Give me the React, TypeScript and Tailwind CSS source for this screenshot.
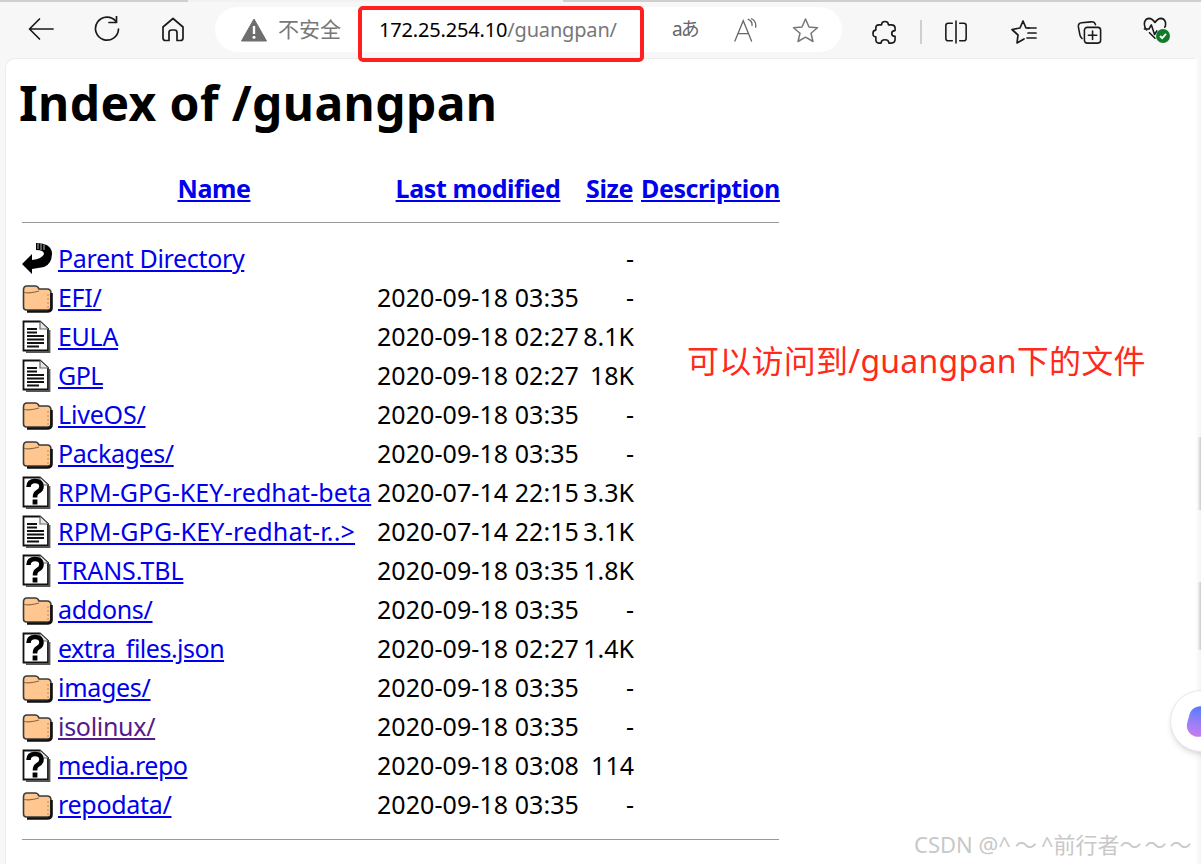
import React from "react";

const Folder = () => (
  <svg width="31" height="30" viewBox="0 0 31 30" className="block">
    <path d="M1.5 7 Q1.5 3 5 3 H13 Q16 3 17 6 H25 Q29 6 29 10 V24 Q29 27 26 27 H4.5 Q1.5 27 1.5 24 Z" fill="#ffc78f" stroke="#3a3a3a" strokeWidth="1.6" />
    <path d="M2 9.5 Q10 10.5 17 8" stroke="#8a6a48" strokeWidth="1.2" fill="none" />
    <path d="M29.5 10 V25 Q29.5 28.5 25 28.5 H5" stroke="#111" strokeWidth="2.6" fill="none" />
    <path d="M26 11 V25" stroke="#b98a5c" strokeWidth="1" strokeDasharray="2 2" />
  </svg>
);

const DocBase = ({ children }: { children: React.ReactNode }) => (
  <svg width="29" height="33" viewBox="0 0 29 33" className="block">
    <path d="M1.5 1.5 H18 L26 9 V30.5 H1.5 Z" fill="#fff" stroke="#111" strokeWidth="1.8" />
    <path d="M18 1.5 V9 H26" fill="#e8e8e8" stroke="#666" strokeWidth="1.2" />
    <path d="M27.5 10 V32 H4" fill="none" stroke="#555" strokeWidth="1.8" />
    {children}
  </svg>
);

const Doc = () => (
  <DocBase>
    <path d="M5 9 H15 M5 12.5 H15 M5 16 H22 M5 19.5 H22 M5 23 H22 M5 26.5 H17" stroke="#111" strokeWidth="2" />
  </DocBase>
);

const QuestionMark = () => (
  <g fill="none" stroke="#000" strokeWidth="4.6">
    <path d="M6.5 11 Q6.5 5 13 5 Q19.5 5 19.5 10.5 Q19.5 14 15.5 16 Q13 17.2 13 21.5" />
    <path d="M13 23.5 V28.5" strokeWidth="4.8" />
  </g>
);

const Unknown = () => (
  <DocBase>
    <QuestionMark />
  </DocBase>
);

const Back = () => (
  <svg width="31" height="33" viewBox="0 0 31 33" className="block">
    <path d="M0 22 L10 12 L10 18 Q20 17 22 12 Q22 8 14 8 L14 1 Q29 1 30 11 Q30 22 22 25 L10 27 V32 Z" fill="#000" />
    <path d="M16 1.5 V7 M19 1.5 V8 M22 2.5 V8" stroke="#999" strokeWidth="1.2" />
  </svg>
);

type Row = { icon: "p" | "f" | "d" | "u"; name: string; date: string; size: string; visited?: boolean; track: string };

const rows: Row[] = [
  { icon: "p", name: "Parent Directory", date: "", size: "-", track: "tracking-[-0.35px]" },
  { icon: "f", name: "EFI/", date: "2020-09-18 03:35", size: "-", track: "tracking-[-0.3px]" },
  { icon: "d", name: "EULA", date: "2020-09-18 02:27", size: "8.1K", track: "tracking-[-0.3px]" },
  { icon: "d", name: "GPL", date: "2020-09-18 02:27", size: "18K", track: "tracking-[-0.5px]" },
  { icon: "f", name: "LiveOS/", date: "2020-09-18 03:35", size: "-", track: "tracking-[-0.2px]" },
  { icon: "f", name: "Packages/", date: "2020-09-18 03:35", size: "-", track: "tracking-[-0.4px]" },
  { icon: "u", name: "RPM-GPG-KEY-redhat-beta", date: "2020-07-14 22:15", size: "3.3K", track: "tracking-[0.1px]" },
  { icon: "d", name: "RPM-GPG-KEY-redhat-r..>", date: "2020-07-14 22:15", size: "3.1K", track: "tracking-[0.2px]" },
  { icon: "u", name: "TRANS.TBL", date: "2020-09-18 03:35", size: "1.8K", track: "tracking-[-0.1px]" },
  { icon: "f", name: "addons/", date: "2020-09-18 03:35", size: "-", track: "tracking-[-0.3px]" },
  { icon: "u", name: "extra_files.json", date: "2020-09-18 02:27", size: "1.4K", track: "tracking-[-0.5px]" },
  { icon: "f", name: "images/", date: "2020-09-18 03:35", size: "-", track: "tracking-[-0.3px]" },
  { icon: "f", name: "isolinux/", date: "2020-09-18 03:35", size: "-", visited: true, track: "tracking-[-0.3px]" },
  { icon: "u", name: "media.repo", date: "2020-09-18 03:08", size: "114", track: "tracking-[-0.5px]" },
  { icon: "f", name: "repodata/", date: "2020-09-18 03:35", size: "-", track: "tracking-[-0.3px]" },
];

const RowIcon = ({ t }: { t: Row["icon"] }) =>
  t === "p" ? <Back /> : t === "f" ? <Folder /> : t === "d" ? <Doc /> : <Unknown />;

const stroke = { fill: "none", stroke: "#1a1a1a", strokeWidth: 1.7, strokeLinecap: "round", strokeLinejoin: "round" } as const;

export default function App() {
  return (
    <div className="relative flex h-[864px] w-[1201px] flex-col overflow-hidden bg-[#f7f7f7] font-['Noto_Sans','Noto_Sans_CJK_SC',sans-serif]">
      {/* top strip */}
      <div className="flex h-[2px] shrink-0">
        <div className="w-[188px] bg-[#cfcfcf]" />
        <div className="w-[375px] bg-[#f2f2f2]" />
        <div className="flex-1 bg-[#cfcfcf]" />
      </div>

      {/* toolbar */}
      <div className="flex h-[56px] shrink-0 items-start">
        <div className="flex h-[54px] items-center">
          <svg width="26" height="24" viewBox="0 0 26 24" className="ml-[28px]" {...stroke}>
            <path d="M25 12 H2 M11.5 2 L1.5 12 L11.5 22" />
          </svg>
          <svg width="26" height="26" viewBox="0 0 26 26" className="ml-[40px]" {...stroke}>
            <path d="M22 5.5 A11.5 11.5 0 1 0 24.5 13" />
            <path d="M15 6.5 H22.5 V0.5" />
          </svg>
          <svg width="24" height="25" viewBox="0 0 24 25" className="ml-[41px]" {...stroke}>
            <path d="M2 10 L12 1.5 L22 10 V21 Q22 23.5 19.5 23.5 H16 V15.5 Q16 13 13.5 13 H10.5 Q8 13 8 15.5 V23.5 H4.5 Q2 23.5 2 21 Z" />
          </svg>
        </div>

        <div className="ml-[30px] mt-[5px] flex h-[45px] w-[627px] items-center rounded-full bg-white">
          <svg width="26" height="24" viewBox="0 0 26 24" className="ml-[26px]">
            <path d="M13 1 L25.5 23 H0.5 Z" fill="#6e6e6e" stroke="#6e6e6e" strokeWidth="1" strokeLinejoin="round" />
            <path d="M13 8 V16" stroke="#fff" strokeWidth="2.4" />
            <circle cx="13" cy="19.3" r="1.5" fill="#fff" />
          </svg>
          <span className="ml-[11px] w-[63px] whitespace-nowrap text-[21px] leading-none text-[#777]">不安全</span>
          <span className="ml-[38px] w-[237px] whitespace-nowrap text-[20px] leading-none tracking-[-0.17px] text-black">
            172.25.254.10<span className="text-[#777]">/guangpan/</span>
          </span>
          <span className="ml-[56px] w-[26px] whitespace-nowrap text-[19px] leading-none tracking-[-2px] text-[#666]">aあ</span>
          <svg width="24" height="24" viewBox="0 0 26 26" className="ml-[36px]" fill="none" stroke="#666" strokeWidth="1.4" strokeLinecap="round">
            <path d="M1 25 L10 3 L19 25 M4.5 17 H15.5" />
            <path d="M15.5 1.5 Q20 3.5 19.5 8 M19 0.8 Q24.5 3.5 23.5 10" />
          </svg>
          <svg width="27" height="26" viewBox="0 0 27 26" className="ml-[34px]" fill="none" stroke="#777" strokeWidth="1.5" strokeLinejoin="round">
            <path d="M13.5 2 L17 10 L25.5 10.7 L19 16.3 L21 24.5 L13.5 20.2 L6 24.5 L8 16.3 L1.5 10.7 L10 10 Z" />
          </svg>
        </div>

        <div className="flex h-[60px] items-center">
          <svg width="25" height="25" viewBox="0 0 26 26" className="ml-[30px]" {...stroke}>
            <path d="M10 5 Q10 1.5 13.5 1.5 Q17 1.5 17 5 H20 Q24 5 24 8.5 V11 Q20.5 11 20.5 14 Q20.5 17 24 17 V20 Q24 24 20 24 H17.5 Q17.5 20.5 13.5 20.5 Q9.5 20.5 9.5 24 H7 Q4 24 4 20 V17.5 Q1 17.5 1 14 Q1 10.5 4 10.5 V8 Q4 5 7 5 Z" />
          </svg>
          <div className="ml-[23px] h-[24px] w-[2px] bg-[#cfcfcf]" />
          <svg width="24" height="24" viewBox="0 0 26 26" className="ml-[22px]" {...stroke}>
            <path d="M9 3.5 H4.5 Q2 3.5 2 6 V20 Q2 22.5 4.5 22.5 H9 M17 3.5 H21.5 Q24 3.5 24 6 V20 Q24 22.5 21.5 22.5 H17 M13 1 V25" />
          </svg>
          <svg width="26" height="24" viewBox="0 0 26 24" className="ml-[43px]" {...stroke}>
            <path d="M18 8 H15 L12 1 L9 8 L1 9.5 L7 15 L6 23 L13 19" />
            <path d="M17 8 H25 M17 13 H25 M16 18 H25" />
          </svg>
          <svg width="25" height="25" viewBox="0 0 27 26" className="ml-[40px]" {...stroke}>
            <rect x="8" y="7.5" width="17.5" height="17" rx="3" />
            <path d="M16.8 11.5 V20.5 M12.3 16 H21.3" />
            <path d="M20 4.5 Q19 1.2 15 1.5 L5 2.5 Q1 3 1.5 7 L3 15 Q3.5 18 5.5 19.5" />
          </svg>
          <div className="relative ml-[41px] h-[30px] w-[28px]">
            <svg width="24" height="24" viewBox="0 0 26 26" {...stroke}>
              <path d="M13 6 Q10 1.5 6.5 1.5 Q1.5 2 1.5 8 Q1.5 11 4 14 M13 6 Q16 1.5 19.5 1.5 Q24.5 2 24.5 8 Q24.5 10 23.5 11 M1.5 13 H6.5 L9 8.5 L12.5 19 L15 15" />
              <path d="M7 17 L13 23" />
            </svg>
            <div className="absolute left-[13px] top-[12px] flex h-[14px] w-[14px] items-center justify-center rounded-full bg-[#107c2a]">
              <svg width="10" height="10" viewBox="0 0 10 10" fill="none" stroke="#fff" strokeWidth="1.8">
                <path d="M2 5 L4.2 7.2 L8 2.8" />
              </svg>
            </div>
          </div>
        </div>
      </div>

      {/* page */}
      <main className="ml-[5px] flex-1 rounded-tl-[10px] border-l border-t border-[#ececec] bg-white pl-[13px] pr-0">
        <h1 className="mt-[14px] text-[48px] font-bold leading-[60px] tracking-[0.4px] text-black">Index of /guangpan</h1>
        <table className="mt-[32px] ml-[3px] w-[757px] table-fixed border-collapse text-[25px] leading-[39px] text-black">
          <colgroup>
            <col className="w-[36px]" />
            <col className="w-[319px]" />
            <col className="w-[202px]" />
            <col className="w-[60px]" />
            <col />
          </colgroup>
          <thead className="tracking-[-0.4px]">
            <tr className="h-[46px]">
              <th />
              <th className="pr-[7px] text-center font-bold">
                <a className="text-[#0000ee] underline" href="#">Name</a>
              </th>
              <th className="text-center font-bold">
                <a className="text-[#0000ee] underline" href="#">Last modified</a>
              </th>
              <th className="pl-[7px] text-left font-bold">
                <a className="text-[#0000ee] underline" href="#">Size</a>
              </th>
              <th className="pl-[2px] text-left font-bold">
                <a className="whitespace-nowrap text-[#0000ee] underline" href="#">Description</a>
              </th>
            </tr>
            <tr className="h-[28px]">
              <th colSpan={5} className="pt-[11px] align-top">
                <div className="h-px bg-[#999]" />
              </th>
            </tr>
          </thead>
          <tbody>
            {rows.map((r) => (
              <tr key={r.name} className="h-[39px]">
                <td className="align-middle"><RowIcon t={r.icon} /></td>
                <td className={`whitespace-nowrap align-middle ${r.track}`}>
                  <a className={`underline ${r.visited ? "text-[#551a8b]" : "text-[#0000ee]"}`} href="#">{r.name}</a>
                </td>
                <td className="whitespace-nowrap align-middle tracking-[0.06px]">{r.date}</td>
                <td className="pr-[5px] text-right align-middle">{r.size}</td>
                <td />
              </tr>
            ))}
            <tr className="h-[30px]">
              <td colSpan={5} className="align-middle">
                <div className="h-px bg-[#999]" />
              </td>
            </tr>
          </tbody>
        </table>
      </main>

      {/* overlays */}
      <div className="absolute left-[358px] top-[6px] h-[56px] w-[286px] rounded-[5px] border-4 border-[#ff1f1f]" />
      <div className="absolute left-[687px] top-[340px] whitespace-nowrap text-[32px] leading-[42px] tracking-[0.25px] text-[#ff2a1a]">可以访问到/guangpan下的文件</div>
      <div className="absolute left-[914px] top-[829px] whitespace-nowrap text-[22px] leading-[30px] text-[#c8c8c8]">
        CSDN @^<span className="mx-1">～</span>^前行者<span className="tracking-[3px]">～～～</span>
      </div>
      <div className="absolute right-0 top-[58px] h-[806px] w-[6px] bg-gradient-to-r from-white to-[#f4f4f4]" />
      <div className="absolute right-0 top-[437px] h-[73px] w-[4px] bg-gradient-to-r from-white to-[#cccccc]" />
      <div className="absolute right-0 top-[582px] h-[68px] w-[4px] bg-gradient-to-r from-white to-[#cccccc]" />
      <div className="absolute left-[1170px] top-[690px] h-[62px] w-[62px] rounded-full border border-[#e6e6f2] bg-white shadow-md">
        <div className="ml-[17px] mt-[15px] h-[31px] w-[22px] rotate-[15deg] rounded-full bg-gradient-to-b from-[#4a7bff] to-[#c77cf0]" />
      </div>
    </div>
  );
}
